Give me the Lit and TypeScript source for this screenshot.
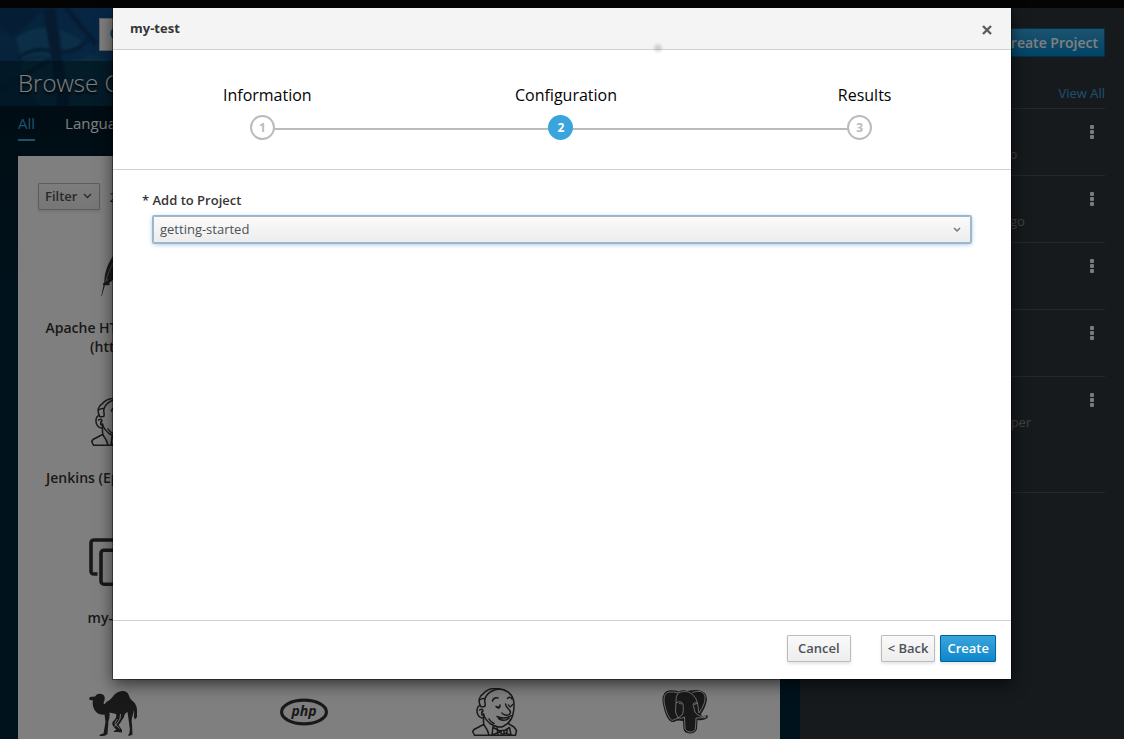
import { LitElement, html, svg, css, nothing } from "lit";
import { customElement, state } from "lit/decorators.js";
import { classMap } from "lit/directives/class-map.js";

type IconName = "feather" | "jenkins" | "clone" | "camel" | "php" | "postgres";

interface CatalogItem {
  icon: IconName;
  name: string;
}

const icons = {
  feather: svg`
    <path fill="currentColor" d="M12.300 48L14.500 37.500L13.800 35.800L15.300 34.500C15.300 26 18 17 24 8Q27 3 30 0C34 3 36 6 36 9C33 21 28 30 20 35L21 36.500C19 37.500 17 37.500 16 37L12.800 48Z"/>
    <path fill="none" stroke="#fff" stroke-width=".5" d="M16.500 34C19 24 25 12 31 4M19 31L18 33"/>`,
  jenkins: svg`
    <g fill="none" stroke="currentColor" stroke-width="1.500" stroke-linejoin="round" stroke-linecap="round">
      <path d="M13 30C8 30 6 24 7.500 20C8 18 9 17.500 10.500 18C8 13 9 8 13 6C17 1 23 0 28 .7C36 1 42 6 43.500 12C44.500 17 44 22 43 26C42 31 38 36 33 38.500C29 40 24 38 20 35.500C16 32 14 29 13.500 26"/>
      <path d="M10.500 18C11.500 20 13 18 14.800 18.500C16 15 14 14 15 11C16 7 18 5 22 3C25 1.500 28 1 30 1M9.500 12Q12 10 15 10.500"/>
      <path d="M9.500 22Q12.500 20 13 23Q11 24 12 27M13.500 26V34L14 37"/>
      <path d="M22.500 13Q23.500 9 28 10M37.500 10.500Q40 8 42 11M26 18.500Q29.500 20.500 30 17M27 19.500Q29 21 30 18.500M38.500 17Q40.500 20.500 42.500 16.500"/>
      <path d="M35.500 16C36 20 39.500 21 40.500 24C40 28 36 27.500 34 26.500Q32.500 26 32 25"/>
      <path d="M27 28.500C31 30.500 37 31 41 27.500M28.500 30.500Q34 34 39 30.500M19 31Q21 34.500 24 35.500"/>
      <path d="M13.500 36.500L4 41.500L2.700 43.500L4.500 47.300H45.500L46.500 42.500L44 39L38 35.500"/>
      <path d="M14 37Q18 42 19 47M23 38.500L22 47L31 43.500L23 39.500M31 42.500H34V46H31ZM34 43L39.500 39.500L41 47L34 45M27 40L28 47M37 41V46"/>
    </g>`,
  clone: svg`
    <g fill="none" stroke="currentColor" stroke-width="3.600">
      <path d="M8.500 36H5Q2 36 2 33V5Q2 2 5 2H34Q36 2 36 5V8"/>
      <rect x="12" y="12.200" width="34" height="34" rx="3"/>
    </g>`,
  camel: svg`
    <path fill="currentColor" d="M0 11.500L.8 9L6 8.600Q7.500 6 10 5.800Q15 5.500 15.700 9.500Q16 12 14.800 14Q14.300 16 15.500 16.300Q17.500 13 20 12.500Q23 10 25.500 6.500Q29 3 34 3Q38 3 39.500 6.500Q40.500 10 42.500 12Q46 14.500 47.300 18Q48.500 22 48 29L46 31.500L44.800 29Q45.500 25 44.800 22Q44.500 26 43.500 28Q42 32 43 36L43.500 46.500Q42 48 39 47.500Q41 45 40.800 41L39.500 31L38.500 24Q35.500 25 35 29L31.500 34.500L29.500 37L33 42V44.500L28.500 44L24.500 44Q25 42 27.500 42L24 38Q22 34 25.500 32Q28 29 27 26L20.500 24.500Q21 29 19.500 33L18.500 46Q16 49 10 47.500Q11 46 14.500 45.500L16.500 34L15.500 26.500Q8 27.500 5 21Q3 17 4 12.500L1.500 12Z"/>
    <path fill="none" stroke="#fff" stroke-width=".9" d="M28.500 31Q25 35 26.500 36.500L30.500 40.500M31.500 26L31 31L27.500 36L25.500 38.500"/>`,
  php: svg`
    <ellipse cx="24" cy="24" rx="22.400" ry="11.800" fill="none" stroke="currentColor" stroke-width="3.200"/>
    <text x="24" y="28" text-anchor="middle" class="php">php</text>`,
  postgres: svg`
    <path fill="currentColor" d="M10.500 34C5 31 2.500 20 1.500 13Q1 3 9 2.300Q13 1.700 18 3.500Q22 1.500 26 3Q32 2 36 2Q46 3 46 11Q45 19 40 26L41 28Q45 28 46.500 27L46.500 30Q42 33 36.500 32L36 41Q34 45.500 29 45.500Q23 45 22.500 41L22 33Q15 31.500 13 34Z"/>
    <path fill="none" stroke="#fff" stroke-width=".8" d="M11 32.500C6.500 29 4 20 3 13Q2.500 4.500 9 4Q13 3.500 17 5Q14.500 9 15 14L14.500 24L17 30L11 32.500M17 5Q25 1.500 31 6Q35.500 10 36.500 15Q33 14 32 16L34 24Q37 29 45 28.500M31 4.500Q42 1 44 8Q45 15 38 25L36.500 15M15 15Q20 12 22 16Q23 24 21 27L17 30Q21 31 23.500 29L24 41Q26 44 29 44Q34 44 34.500 40L35 30L45 29.500M18 15.500L21 16M33 16.500L36 15.500"/>`,
};

const catalogRows: { roomy: boolean; labelled: boolean; items: CatalogItem[] }[] = [
  { roomy: false, labelled: true, items: [{ icon: "feather", name: "Apache HTTP Server (httpd)" }] },
  { roomy: false, labelled: true, items: [{ icon: "jenkins", name: "Jenkins (Ephemeral)" }] },
  { roomy: true, labelled: true, items: [{ icon: "clone", name: "my-test" }] },
  {
    roomy: false,
    labelled: false,
    items: [
      { icon: "camel", name: "Perl" },
      { icon: "php", name: "PHP" },
      { icon: "jenkins", name: "Pipeline" },
      { icon: "postgres", name: "PostgreSQL" },
    ],
  },
];

const projects = [
  { meta: "created by developer 2 days ago" },
  { meta: "created by developer 12 days ago" },
  { meta: "" },
  { meta: "" },
  { meta: "getting-started made by developer" },
];

const steps = ["Information", "Configuration", "Results"];

@customElement("catalog-view")
class CatalogView extends LitElement {
  static styles = css`
    :host { display: block; position: relative; flex: 1; min-width: 0; background: #002538; }
    .art { position: absolute; top: 0; left: 0; width: 100%; height: 300px; }
    .content { position: relative; display: flex; flex-direction: column; height: 100%; }
    .hero { padding: 10px 99px; }
    .search { display: flex; align-items: center; gap: 8px; height: 33px; padding: 0 10px; background: #fff; border: 1px solid #bbb; box-sizing: border-box; color: #0088ce; }
    .search input { flex: 1; border: 0; outline: 0; font: 14px "Open Sans", sans-serif; }
    h1 { margin: 0; padding: 0 18px 2px; line-height: 43px; font-size: 24px; font-weight: 300; color: #fff; background: rgba(0, 34, 48, 0.6); text-shadow: 0 2px 2px #000; }
    .tabs { display: flex; gap: 30px; padding: 0 18px; height: 50px; box-sizing: border-box; }
    .tabs a { height: 33px; line-height: 35px; font-size: 15px; color: #fff; text-decoration: none; border-bottom: 2px solid transparent; }
    .tabs a.active { color: #39a5dc; border-color: #39a5dc; }
    .card { flex: 1; margin: 0 20px 0 18px; background: #fff; overflow: hidden; }
    .toolbar { display: flex; align-items: center; gap: 9px; padding: 27px 20px 38px; font-size: 13px; line-height: 20px; color: #333; }
    .filter { display: flex; align-items: center; gap: 6px; height: 27px; padding: 0 7px 2px 6px; font: 600 13px "Open Sans", sans-serif; color: #4d5258; border: 1px solid #bbb; border-radius: 1px; background: linear-gradient(#fafafa, #ededed); box-shadow: 0 2px 3px rgba(3, 3, 3, 0.1); }
    .row { display: grid; grid-template-columns: repeat(4, 1fr); min-height: 140px; }
    .row.roomy { min-height: 150px; }
    .tile { display: flex; flex-direction: column; align-items: center; gap: 22px; padding: 0 20px 42px; font-size: 14px; font-weight: 600; line-height: 19px; color: #333; text-align: center; text-decoration: none; }
    .tile svg { width: 48px; height: 48px; flex: none; }
    .php { font: italic 700 14px "Open Sans", sans-serif; fill: currentColor; }
  `;

  render() {
    return html`
      <svg class="art" viewBox="0 0 800 300" preserveAspectRatio="none" aria-hidden="true">
        <defs>
          <linearGradient id="sky" x1="0" x2="1" y1="0" y2="0">
            <stop offset="0" stop-color="#0c4674" /><stop offset=".15" stop-color="#104f8c" /><stop offset="1" stop-color="#0a3c66" />
          </linearGradient>
          <linearGradient id="deep" x1="0" x2="0" y1="0" y2="1">
            <stop offset="0" stop-color="#001a28" /><stop offset="1" stop-color="#002538" />
          </linearGradient>
          <filter id="soft"><feGaussianBlur stdDeviation="0.8" /></filter>
        </defs>
        <rect width="800" height="98" fill="url(#sky)" />
        <g filter="url(#soft)">
          <path fill="#0a3a6c" d="M0 0H42L37 8L14 30L0 20Z" />
          <path fill="#165f8c" d="M16 30Q32 18 48 20L54 52Q40 44 22 52Z" />
          <path fill="#165f8c" d="M60 22Q76 26 84 36L78 42Q70 44 62 42Z" />
          <path fill="#135882" d="M22 55Q40 44 53 52L56 98H40L20 70ZM64 52Q76 54 92 46L108 52L113 98H70Z" />
          <path fill="none" stroke="#0b3a64" stroke-width="4" d="M18 50Q34 38 52 43Q66 46 78 40L88 32" />
          <path fill="#0b3560" d="M43 0H55L62 50L70 98H58L51 50Z" />
          <path fill="none" stroke="#0c3866" stroke-width="5" d="M66 0L96 36M0 82L50 52" />
        </g>
        <rect y="98" width="800" height="202" fill="url(#deep)" />
      </svg>
      <div class="content">
        <div class="hero">
          <label class="search">
            <svg width="16" height="16" viewBox="0 0 16 16" aria-hidden="true"><circle cx="6.500" cy="6.500" r="5" fill="none" stroke="currentColor" stroke-width="2.500" /><path d="M10 10L15 15" stroke="currentColor" stroke-width="3" /></svg>
            <input type="search" aria-label="Search catalog" />
          </label>
        </div>
        <h1>Browse Catalog</h1>
        <nav class="tabs"><a class="active" href="#all">All</a><a href="#languages">Languages</a></nav>
        <section class="card">
          <div class="toolbar">
            <button class="filter" type="button">Filter
              <svg width="9" height="6" viewBox="0 0 9 6" aria-hidden="true"><path d="M1 1L4.500 4.500L8 1" fill="none" stroke="currentColor" stroke-width="1.300" /></svg>
            </button>
            <span>25 Items</span>
          </div>
          ${catalogRows.map(
            (row) => html`<div class=${classMap({ row: true, roomy: row.roomy })}>
              ${row.items.map(
                (item) => html`<a class="tile" href="#item" aria-label=${item.name}>
                  <svg viewBox="0 0 48 48" aria-hidden="true">${icons[item.icon]}</svg>
                  ${row.labelled ? html`<span>${item.name}</span>` : nothing}
                </a>`
              )}
            </div>`
          )}
        </section>
      </div>
    `;
  }
}

@customElement("project-panel")
class ProjectPanel extends LitElement {
  static styles = css`
    :host { display: block; width: 324px; padding: 20px 19px 0 22px; box-sizing: border-box; background: #2d353a; font-size: 13px; }
    .create { display: block; height: 29px; margin-left: auto; padding: 0 6px; font: 600 14px "Open Sans", sans-serif; color: #fff; border: 1px solid #00659c; background: linear-gradient(#39a5dc, #0088ce); }
    .all { display: block; padding: 26px 0 5px; line-height: 20px; text-align: right; color: #39a5dc; text-decoration: none; }
    ul { list-style: none; margin: 0; padding: 0; border-bottom: 1px solid #4b5054; }
    li { display: flex; justify-content: space-between; height: 66px; border-top: 1px solid #4b5054; }
    li:last-child { height: 115px; }
    .meta { padding-top: 36px; line-height: 18px; color: #7f8286; }
    .kebab { display: flex; width: 26px; height: 16px; padding: 0; margin-top: 15px; border: 0; background: none; color: #f5f5f5; justify-content: center; }
  `;

  render() {
    return html`
      <button class="create" type="button">Create Project</button>
      <a class="all" href="#projects">View All</a>
      <ul>
        ${projects.map(
          (p) => html`<li>
            <span class="meta">${p.meta}</span>
            <button class="kebab" type="button" aria-label="Actions">
              <svg width="4" height="16" viewBox="0 0 4 16" fill="currentColor" aria-hidden="true"><rect y="1" width="4" height="4" rx="1" /><rect y="6" width="4" height="4" rx="1" /><rect y="11" width="4" height="4" rx="1" /></svg>
            </button>
          </li>`
        )}
      </ul>
    `;
  }
}

@customElement("order-dialog")
class OrderDialog extends LitElement {
  static styles = css`
    :host { display: block; position: relative; background: #fff; box-shadow: 0 0 0 1px rgba(0, 0, 0, 0.4), 0 5px 15px rgba(0, 0, 0, 0.6); }
    header { display: flex; align-items: center; justify-content: space-between; height: 41px; padding: 0 17px; background: #f4f4f4; border-bottom: 1px solid #d1d1d1; }
    h2 { margin: 0; padding-bottom: 2px; font-size: 13px; font-weight: 700; color: #363636; }
    .close { display: flex; padding: 3px 2px 1px; border: 0; background: none; color: #5c5c5c; }
    .smudge { position: absolute; left: 60%; top: 34px; width: 12px; height: 12px; background: radial-gradient(closest-side, rgba(0, 0, 0, 0.18), transparent); }
    .steps { display: grid; grid-template-columns: repeat(3, 1fr); list-style: none; margin: 0; padding: 34px 2px 29px 0; border-bottom: 1px solid #d1d1d1; }
    .step { position: relative; display: flex; flex-direction: column; align-items: center; gap: 9px; }
    .title { padding-left: 10px; font-size: 16px; line-height: 22px; color: #030303; }
    .step + .step::before { content: ""; position: absolute; right: 50%; bottom: 10px; width: 100%; height: 2px; background: #bbb; }
    .number { position: relative; z-index: 1; width: 25px; height: 25px; box-sizing: border-box; border: 2px solid #bbb; border-radius: 50%; background: #fff; color: #bbb; font-size: 12px; font-weight: 700; line-height: 21px; text-align: center; }
    .current .number { background: #39a5dc; border-color: #39a5dc; color: #fff; }
    .body { min-height: 450px; padding: 20px 40px; box-sizing: border-box; }
    label { display: block; margin: 0 0 6px -11px; font-size: 13px; font-weight: 600; line-height: 20px; color: #363636; }
    .select { display: grid; align-items: center; }
    .select > * { grid-area: 1 / 1; }
    .select svg { justify-self: end; margin-right: 10px; pointer-events: none; color: #72767b; }
    select { appearance: none; width: 100%; height: 27px; padding: 0 6px 2px; font: 13px "Open Sans", sans-serif; color: #4d5258; border: 1px solid #b0b3b6; border-radius: 1px; outline: 0; background: linear-gradient(#fafafa, #ededed); box-shadow: 0 0 0 1px #8db8e2, 0 1px 5px rgba(57, 140, 210, 0.6); }
    footer { display: flex; justify-content: flex-end; gap: 5px; padding: 14px 15px 17px; border-top: 1px solid #d1d1d1; }
    footer button { height: 27px; padding: 0 6px 2px; font: 600 13px "Open Sans", sans-serif; color: #4d5258; border: 1px solid #bbb; border-radius: 1px; background: linear-gradient(#fafafa, #ededed); box-shadow: 0 2px 3px rgba(3, 3, 3, 0.1); }
    footer .cancel { margin-right: 25px; padding: 0 10px 2px; }
    footer .primary { color: #fff; border-color: #00659c; background: linear-gradient(#39a5dc, #0f86cc); }
  `;

  @state() private current = 1;

  render() {
    return html`
      <header>
        <h2>my-test</h2>
        <button class="close" type="button" aria-label="Close">
          <svg width="10" height="10" viewBox="0 0 10 10" aria-hidden="true"><path d="M1 1L9 9M9 1L1 9" stroke="currentColor" stroke-width="2.400" /></svg>
        </button>
      </header>
      <div class="smudge"></div>
      <ol class="steps">
        ${steps.map(
          (title, i) => html`<li class=${classMap({ step: true, current: i === this.current })}>
            <span class="title">${title}</span><span class="number">${i + 1}</span>
          </li>`
        )}
      </ol>
      <div class="body">
        <label for="project">* Add to Project</label>
        <div class="select">
          <select id="project"><option>getting-started</option></select>
          <svg width="8" height="6" viewBox="0 0 8 6" aria-hidden="true"><path d="M1 1L4 4L7 1" fill="none" stroke="currentColor" stroke-width="1.500" /></svg>
        </div>
      </div>
      <footer>
        <button class="cancel" type="button">Cancel</button>
        <button type="button">&lt; Back</button>
        <button class="primary" type="button">Create</button>
      </footer>
    `;
  }
}

@customElement("app-root")
class AppRoot extends LitElement {
  static styles = css`
    :host { display: flex; flex-direction: column; position: relative; height: 100vh; overflow: hidden; font-family: "Open Sans", sans-serif; }
    .topbar { flex: none; height: 8px; background: #080808; }
    .page { flex: 1; min-height: 0; display: flex; }
    .backdrop { position: absolute; inset: 0; padding: 8px 20px; background: rgba(0, 0, 0, 0.5); }
    .dialog { max-width: 898px; margin: 0 auto; }
  `;

  render() {
    return html`
      <div class="topbar"></div>
      <div class="page">
        <catalog-view></catalog-view>
        <project-panel></project-panel>
      </div>
      <div class="backdrop">
        <order-dialog class="dialog" role="dialog" aria-label="my-test"></order-dialog>
      </div>
    `;
  }
}
